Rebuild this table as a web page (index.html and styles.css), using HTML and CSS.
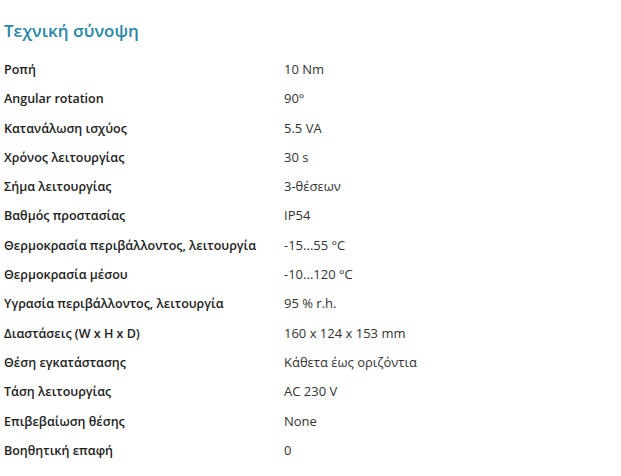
FILE: index.html
```html
<!DOCTYPE html>
<html lang="el">
<head>
<meta charset="utf-8">
<link rel="stylesheet" href="styles.css">
</head>
<body>
<section class="overview">
  <h2 class="title">Τεχνική σύνοψη</h2>
  <dl class="specs">
    <dt>Ροπή</dt><dd>10 Nm</dd>
    <dt>Angular rotation</dt><dd>90°</dd>
    <dt>Κατανάλωση ισχύος</dt><dd>5.5 VA</dd>
    <dt>Χρόνος λειτουργίας</dt><dd>30 s</dd>
    <dt>Σήμα λειτουργίας</dt><dd>3-θέσεων</dd>
    <dt>Βαθμός προστασίας</dt><dd>IP54</dd>
    <dt>Θερμοκρασία περιβάλλοντος, λειτουργία</dt><dd>-15...55 °C</dd>
    <dt>Θερμοκρασία μέσου</dt><dd>-10...120 °C</dd>
    <dt>Υγρασία περιβάλλοντος, λειτουργία</dt><dd>95 % r.h.</dd>
    <dt>Διαστάσεις (W x H x D)</dt><dd>160 x 124 x 153 mm</dd>
    <dt>Θέση εγκατάστασης</dt><dd>Κάθετα έως οριζόντια</dd>
    <dt>Τάση λειτουργίας</dt><dd>AC 230 V</dd>
    <dt>Επιβεβαίωση θέσης</dt><dd>None</dd>
    <dt>Βοηθητική επαφή</dt><dd>0</dd>
  </dl>
</section>
</body>
</html>
```

FILE: styles.css
```css
html, body {
  margin: 0;
  padding: 0;
  background: #ffffff;
}
body {
  font-family: "Open Sans", "Noto Sans", sans-serif;
}
.overview {
  padding: 19px 0 0 4px;
}
.title {
  margin: 0 0 12px 0;
  font-size: 17px;
  font-weight: 600;
  color: #2a86a6;
  line-height: 24px;
}
.specs {
  margin: 0;
  display: grid;
  grid-template-columns: 280px auto;
  row-gap: 0;
}
.specs dt {
  font-size: 12.5px;
  font-weight: 550;
  color: #222222;
  line-height: 29.3px;
}
.specs dd {
  margin: 0;
  font-size: 13px;
  font-weight: 400;
  color: #333333;
  line-height: 29.3px;
}
```
